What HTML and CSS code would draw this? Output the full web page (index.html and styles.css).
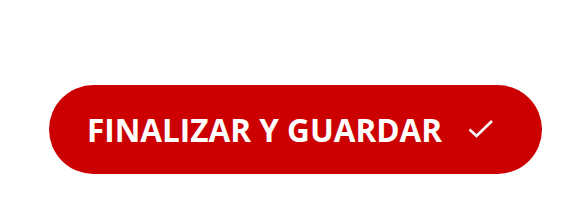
FILE: index.html
```html
<!DOCTYPE html>
<html lang="es">
<head>
    <meta charset="UTF-8">
    <title>Finalizar</title>
    <link rel="stylesheet" href="styles.css">
</head>
<body>
    <div class="actions">
        <button class="finish" type="button">
            <span class="label">FINALIZAR Y GUARDAR</span>
            <svg class="check" width="26" height="20" viewBox="0 0 26 20">
                <polyline points="1.5,10.5 8.5,17 24,2" fill="none" stroke="#fff" stroke-width="2.6"/>
            </svg>
        </button>
    </div>
</body>
</html>
```

FILE: styles.css
```css
* {
    padding: 0;
    margin: 0;
    box-sizing: border-box;
}

html,
body {
    background: #fff;
    width: 580px;
    height: 207px;
}

.actions {
    padding: 85px 0 0 49px;
    display: flex;
}

.finish {
    width: 493px;
    height: 89px;
    border: none;
    border-radius: 45px;
    background: #cc0000;
    color: #fff;
    display: flex;
    align-items: center;
    padding-left: 38px;
    gap: 26px;
    cursor: pointer;
    outline: none;
}

.label {
    font-family: "Open Sans", sans-serif;
    font-weight: 700;
    font-size: 31.5px;
    letter-spacing: 0;
}

.check {
    display: block;
    margin-top: -1px;
}
```
